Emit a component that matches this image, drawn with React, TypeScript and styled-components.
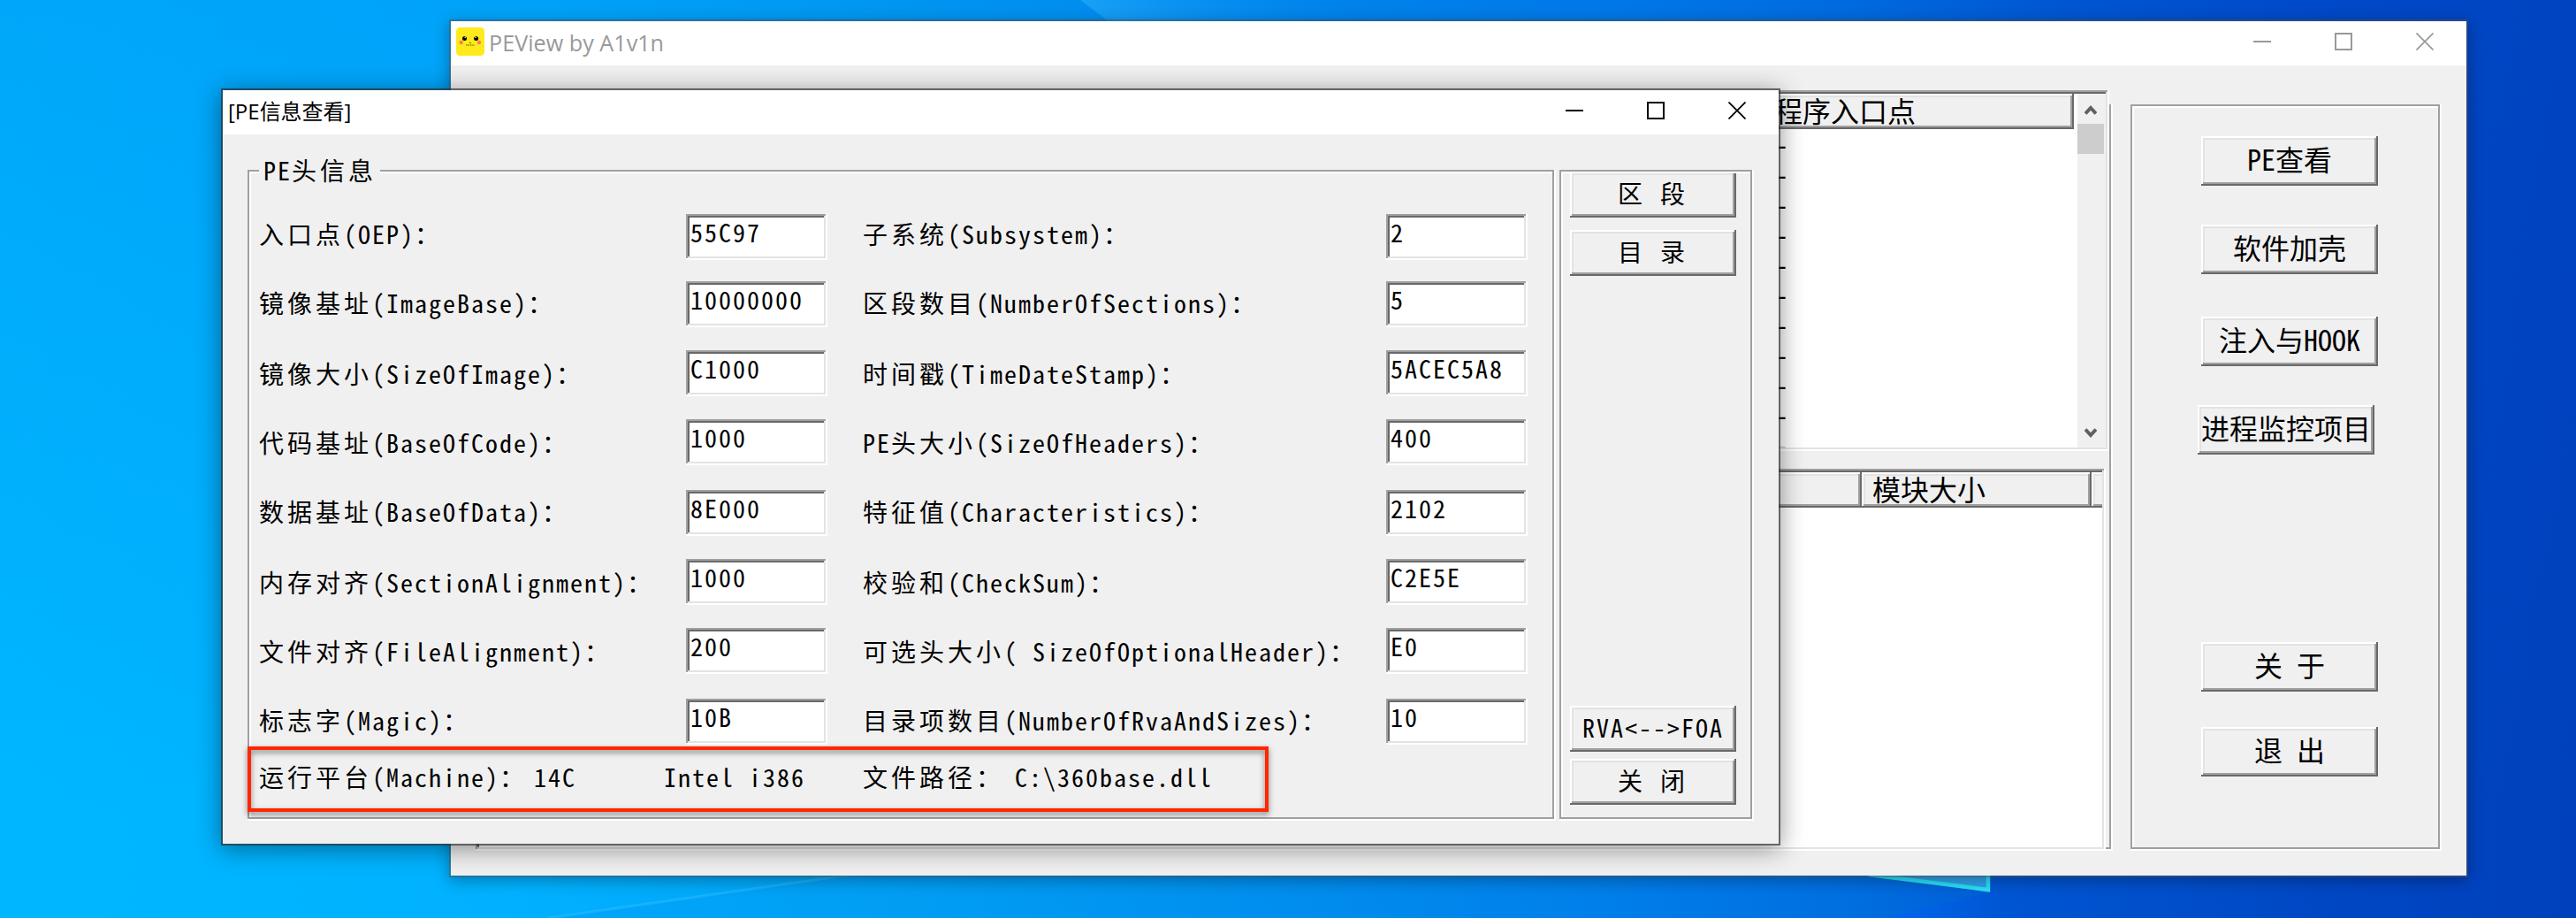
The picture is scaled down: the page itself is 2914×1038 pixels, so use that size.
import { Fragment } from 'react';
import styled, { createGlobalStyle, css } from 'styled-components';

const GlobalStyle = createGlobalStyle`
  body {
    margin: 0;
    overflow: hidden;
  }

  * {
    box-sizing: border-box;
  }
`;

const FACE = '#f0f0f0';

const raised = css`
  background: ${FACE};
  box-shadow:
    inset -2px -2px 0 #696969,
    inset 2px 2px 0 #fff,
    inset -4px -4px 0 #a0a0a0,
    inset 4px 4px 0 #e3e3e3;
`;

const sunken = css`
  background: #fff;
  padding: 4px;
  box-shadow:
    inset -2px -2px 0 #fff,
    inset 2px 2px 0 #a0a0a0,
    inset -4px -4px 0 #e3e3e3,
    inset 4px 4px 0 #696969;
`;

const Desktop = styled.div`
  position: relative;
  width: 2914px;
  height: 1038px;
  overflow: hidden;
  color: #000;
  font-family: 'Noto Sans CJK SC', sans-serif;
  background:
    linear-gradient(180deg, rgba(0, 84, 220, 0.16) 0%, rgba(0, 84, 220, 0) 90%),
    linear-gradient(
      90deg,
      #00b7ff 0%,
      #00b1ff 20%,
      #00a3f5 34%,
      #008eee 50%,
      #007fea 62%,
      #006ee0 72%,
      #0056d0 80%,
      #0047c4 90%,
      #0040bc 100%
    );
`;

const Wallpaper = styled.svg`
  position: absolute;
  inset: 0;
`;

const Window = styled.section<{ $active?: boolean }>`
  position: absolute;
  border: 2px solid ${(p) => (p.$active ? 'rgba(45, 45, 45, 0.7)' : 'rgba(75, 80, 90, 0.5)')};
  background: ${FACE};
  background-clip: padding-box;
  box-shadow: ${(p) =>
    p.$active ? '0 4px 26px rgba(0, 0, 0, 0.42)' : '0 4px 16px rgba(0, 0, 0, 0.3)'};
`;

const MainWindow = styled(Window)`
  left: 508px;
  top: 22px;
  width: 2284px;
  height: 970px;
`;

const InfoWindow = styled(Window)`
  left: 250px;
  top: 100px;
  width: 1764px;
  height: 856px;
`;

const TitleBar = styled.header<{ $active?: boolean }>`
  display: flex;
  align-items: center;
  height: 50px;
  padding: 0 1px 4px 6px;
  background: #fff;
  color: ${(p) => (p.$active ? '#000' : '#999')};
`;

const Title = styled.h1<{ $size: number }>`
  flex: 1;
  margin: 0;
  padding-top: 2px;
  font-family: 'Open Sans', 'Noto Sans CJK SC', sans-serif;
  font-size: ${(p) => p.$size}px;
  font-weight: 400;
  line-height: 46px;
`;

const AppIcon = styled.svg`
  width: 32px;
  height: 32px;
  margin-right: 5px;
`;

const Control = styled.button`
  display: flex;
  align-items: center;
  justify-content: center;
  width: 92px;
  height: 46px;
  padding: 0;
  border: 0;
  background: none;
  color: inherit;
`;

const Run = styled.span<{ $gap: number }>`
  letter-spacing: ${(p) => p.$gap}px;
  font-feature-settings: 'hwid';
`;

const Line = styled.span<{ $size: number }>`
  font-size: ${(p) => p.$size}px;
  line-height: 32px;
  white-space: pre;
  text-spacing-trim: space-all;
`;

const Group = styled.div`
  border: 2px solid #a0a0a0;
  box-shadow:
    inset 2px 2px 0 #fff,
    2px 2px 0 #fff,
    2px 0 0 #fff,
    0 2px 0 #fff;
`;

const PushButton = styled.button<{ $top?: number; $shift?: number }>`
  ${raised}
  display: flex;
  flex-shrink: 0;
  align-items: center;
  justify-content: center;
  width: 200px;
  height: 56px;
  margin: ${(p) => p.$top ?? 0}px 0 0 ${(p) => p.$shift ?? 0}px;
  padding: 0 0 6px;
  border: 0;
  color: #000;
  font-family: inherit;
`;

/* main window */

const MainBody = styled.div`
  display: flex;
  padding: 44px 0 0 28px;
`;

const ListArea = styled(Group)`
  display: flex;
  flex-direction: column;
  gap: 20px;
  width: 1850px;
  height: 842px;
`;

const ListBox = styled.div<{ $width: number; $height: number }>`
  ${sunken}
  display: flex;
  flex-shrink: 0;
  width: ${(p) => p.$width}px;
  height: ${(p) => p.$height}px;
  margin-left: -2px;

  &:first-child {
    margin-top: -18px;
  }
`;

const ListContent = styled.div`
  flex: 1;
  min-width: 0;
  overflow: hidden;
`;

const ListHeader = styled.div`
  display: flex;
  height: 40px;
`;

const HeaderCell = styled.div<{ $width: number }>`
  ${raised}
  flex: 0 0 ${(p) => p.$width}px;
  padding: 2px 0 0 12px;
  overflow: hidden;
`;

const ListRow = styled.div`
  height: 34px;
  padding-left: 1465px;
  line-height: 32px;
`;

const ScrollBar = styled.div`
  display: flex;
  flex-direction: column;
  align-items: center;
  width: 32px;
  background: ${FACE};
`;

const ScrollArrow = styled.svg`
  width: 14px;
  height: 12px;
  margin: 12px 2px 10px 0;
`;

const ScrollThumb = styled.div`
  width: 30px;
  height: 34px;
  margin: 0 2px auto 0;
  background: #cdcdcd;
`;

const SidePanel = styled(Group)`
  width: 350px;
  height: 842px;
  margin-left: 22px;
  padding: 34px 0 0 78px;
`;

/* info dialog */

const InfoBody = styled.div`
  display: flex;
  gap: 6px;
  padding: 40px 0 0 28px;
`;

const InfoGroup = styled(Group)`
  width: 1478px;
  height: 734px;
  padding-left: 11px;
`;

const Legend = styled.div`
  display: flex;
  width: 137px;
  height: 32px;
  padding-left: 5px;
  margin: -18px 0 0 0;
  background: ${FACE};
`;

const FieldGrid = styled.div`
  display: grid;
  grid-template-columns: 483px 200px 592px 160px;
  grid-template-rows: 76px 78px 78px 80px 78px 78px 80px 52px;
  margin-top: 34px;
`;

const Label = styled.div<{ $nudge: number }>`
  display: flex;
  height: 32px;
  padding-top: ${(p) => p.$nudge}px;
`;

const Input = styled.div`
  ${sunken}
  width: 160px;
  height: 52px;
  padding-left: 5px;
`;

const PlatformRow = styled.div`
  display: grid;
  grid-template-columns: 311px 147px 225px 172px 1fr;
  margin-top: 20px;
`;

const ToolGroup = styled(Group)`
  display: flex;
  flex-direction: column;
  width: 218px;
  height: 734px;
  padding-left: 10px;

  ${PushButton} {
    width: 188px;
    height: 52px;
    padding-bottom: 4px;
  }
`;

const TopLine = styled.div`
  height: 2px;
  margin: 0 0 -2px -10px;
  background: #fff;
  z-index: 1;
`;

const Highlight = styled.div`
  position: absolute;
  left: 28px;
  top: 742px;
  width: 1155px;
  height: 74px;
  border: 4px solid #ff2600;
  filter: drop-shadow(0 3px 3px rgba(0, 0, 0, 0.5));
`;

interface TextProps {
  text: string;
  size?: number;
  gap?: number;
}

// Latin runs take half a cell, so they also get half of the extra spacing.
const Text = ({ text, size = 28, gap = 4 }: TextProps) => (
  <Line $size={size}>
    {text.split(/([\x20-\x7e]+)/).map((run, i) => (
      <Fragment key={i}>{run && <Run $gap={i % 2 ? gap / 2 : gap}>{run}</Run>}</Fragment>
    ))}
  </Line>
);

const MainText = ({ text }: { text: string }) => <Text text={text} size={32} gap={0} />;

const WindowControls = () => (
  <>
    <Control aria-label="minimize">
      <svg width="20" height="20">
        <path d="M0 10h20" stroke="currentColor" strokeWidth="2" />
      </svg>
    </Control>
    <Control aria-label="maximize">
      <svg width="20" height="20">
        <path d="M1 1h18v18H1z" fill="none" stroke="currentColor" strokeWidth="2" />
      </svg>
    </Control>
    <Control aria-label="close">
      <svg width="20" height="20">
        <path d="M.5.5l19 19M19.5.5l-19 19" stroke="currentColor" strokeWidth="1.7" />
      </svg>
    </Control>
  </>
);

interface Field {
  label: string;
  value: string;
}

const rows: { nudge: number; fields: [Field, Field] }[] = [
  {
    nudge: 6,
    fields: [
      { label: '入口点(OEP)：', value: '55C97' },
      { label: '子系统(Subsystem)：', value: '2' },
    ],
  },
  {
    nudge: 8,
    fields: [
      { label: '镜像基址(ImageBase)：', value: '10000000' },
      { label: '区段数目(NumberOfSections)：', value: '5' },
    ],
  },
  {
    nudge: 10,
    fields: [
      { label: '镜像大小(SizeOfImage)：', value: 'C1000' },
      { label: '时间戳(TimeDateStamp)：', value: '5ACEC5A8' },
    ],
  },
  {
    nudge: 10,
    fields: [
      { label: '代码基址(BaseOfCode)：', value: '1000' },
      { label: 'PE头大小(SizeOfHeaders)：', value: '400' },
    ],
  },
  {
    nudge: 8,
    fields: [
      { label: '数据基址(BaseOfData)：', value: '8E000' },
      { label: '特征值(Characteristics)：', value: '2102' },
    ],
  },
  {
    nudge: 10,
    fields: [
      { label: '内存对齐(SectionAlignment)：', value: '1000' },
      { label: '校验和(CheckSum)：', value: 'C2E5E' },
    ],
  },
  {
    nudge: 10,
    fields: [
      { label: '文件对齐(FileAlignment)：', value: '200' },
      { label: '可选头大小( SizeOfOptionalHeader)：', value: 'E0' },
    ],
  },
  {
    nudge: 8,
    fields: [
      { label: '标志字(Magic)：', value: '10B' },
      { label: '目录项数目(NumberOfRvaAndSizes)：', value: '10' },
    ],
  },
];

const platform = ['运行平台(Machine)：', '14C', 'Intel i386', '文件路径：', 'C:\\360base.dll'];

const sideButtons = [
  { text: 'PE查看' },
  { text: '软件加壳', top: 44 },
  { text: '注入与HOOK', top: 48 },
  { text: '进程监控项目', top: 44, shift: -4 },
  { text: '关 于', top: 212 },
  { text: '退 出', top: 40 },
];

const toolButtons = [
  { text: '区 段', top: 0 },
  { text: '目 录', top: 14 },
  { text: 'RVA<-->FOA', top: 486 },
  { text: '关 闭', top: 8 },
];

export default function App() {
  return (
    <Desktop>
      <GlobalStyle />
      <Wallpaper width="2914" height="1038">
        <defs>
          <linearGradient id="beam" x1="0" x2="1">
            <stop offset="0" stopColor="#30b4ff" stopOpacity="0.5" />
            <stop offset="1" stopColor="#0080f0" stopOpacity="0" />
          </linearGradient>
          <linearGradient id="ray" x1="0" x2="1">
            <stop offset="0" stopColor="#0078e6" stopOpacity="0.16" />
            <stop offset="1" stopColor="#0078e6" stopOpacity="0" />
          </linearGradient>
          <linearGradient id="shade" x1="0" x2="1">
            <stop offset="0" stopColor="#0062ff" stopOpacity="0.45" />
            <stop offset="0.3" stopColor="#0050d0" stopOpacity="0.6" />
            <stop offset="1" stopColor="#0047c4" stopOpacity="0" />
          </linearGradient>
        </defs>
        <path d="M1222 0h260l80 30h-300z" fill="url(#beam)" />
        <path d="M620 1038L970 988h600v50z" fill="url(#ray)" />
        <path d="M620 1038L970 988" stroke="#40c4ff" strokeWidth="3" opacity="0.35" />
        <path d="M2130 1038l121-29v-20h350v49z" fill="url(#shade)" />
        <path d="M2112 988l139 21v-21z" fill="#2fa0ea" />
        <path d="M2114 989l135 17v-20" fill="none" stroke="#27e0f7" strokeWidth="4.5" />
      </Wallpaper>

      <MainWindow>
        <TitleBar>
          <AppIcon viewBox="0 0 32 32">
            <rect width="32" height="32" rx="4.5" fill="#ffea1c" />
            <circle cx="9.5" cy="12.4" r="2.5" />
            <circle cx="22.6" cy="12.4" r="2.5" />
            <circle cx="10.2" cy="11.3" r=".8" fill="#fff" />
            <circle cx="22" cy="11.3" r=".8" fill="#fff" />
            <circle cx="5.7" cy="17" r="2.2" fill="#ff7d55" />
            <circle cx="26" cy="17" r="2.2" fill="#ff7d55" />
            <path d="M15.2 17.5h1.6" stroke="#4a4000" />
            <path d="M11.2 20h10" stroke="#4a4000" strokeDasharray="1.4 1" />
          </AppIcon>
          <Title $size={25.2}>PEView by A1v1n</Title>
          <WindowControls />
        </TitleBar>
        <MainBody>
          <ListArea>
            <ListBox $width={1848} $height={408}>
              <ListContent>
                <ListHeader>
                  <HeaderCell $width={1453} />
                  <HeaderCell $width={351}>
                    <MainText text="程序入口点" />
                  </HeaderCell>
                </ListHeader>
                {Array.from({ length: 11 }, (_, i) => (
                  <ListRow key={i}>
                    <MainText text="-" />
                  </ListRow>
                ))}
              </ListContent>
              <ScrollBar>
                <ScrollArrow viewBox="0 0 14 12">
                  <path d="M1 10.5l6-6.5 6 6.5" fill="none" stroke="#606060" strokeWidth="4" />
                </ScrollArrow>
                <ScrollThumb />
                <ScrollArrow viewBox="0 0 14 12">
                  <path d="M1 1.5L7 8l6-6.5" fill="none" stroke="#606060" strokeWidth="4" />
                </ScrollArrow>
              </ScrollBar>
            </ListBox>
            <ListBox $width={1844} $height={432}>
              <ListContent>
                <ListHeader>
                  <HeaderCell $width={1564} />
                  <HeaderCell $width={260}>
                    <MainText text="模块大小" />
                  </HeaderCell>
                  <HeaderCell $width={40} />
                </ListHeader>
              </ListContent>
            </ListBox>
          </ListArea>
          <SidePanel>
            {sideButtons.map((b) => (
              <PushButton key={b.text} $top={b.top} $shift={b.shift}>
                <MainText text={b.text} />
              </PushButton>
            ))}
          </SidePanel>
        </MainBody>
      </MainWindow>

      <InfoWindow $active>
        <TitleBar $active>
          <Title $size={24}>[PE信息查看]</Title>
          <WindowControls />
        </TitleBar>
        <InfoBody>
          <InfoGroup>
            <Legend>
              <Text text="PE头信息" />
            </Legend>
            <FieldGrid>
              {rows.map(({ nudge, fields }) =>
                fields.map((field) => (
                  <Fragment key={field.label}>
                    <Label $nudge={nudge}>
                      <Text text={field.label} />
                    </Label>
                    <Input>
                      <Text text={field.value} />
                    </Input>
                  </Fragment>
                )),
              )}
            </FieldGrid>
            <PlatformRow>
              {platform.map((text) => (
                <Text key={text} text={text} />
              ))}
            </PlatformRow>
          </InfoGroup>
          <ToolGroup>
            <TopLine />
            {toolButtons.map((b) => (
              <PushButton key={b.text} $top={b.top}>
                <Text text={b.text} />
              </PushButton>
            ))}
          </ToolGroup>
        </InfoBody>
        <Highlight />
      </InfoWindow>
    </Desktop>
  );
}
